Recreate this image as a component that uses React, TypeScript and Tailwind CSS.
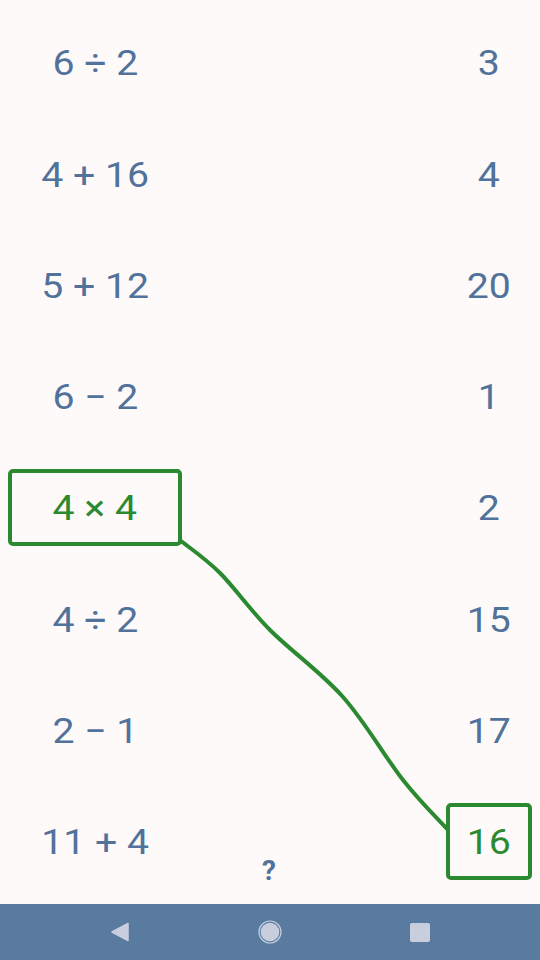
const rows = [
  { left: "6 ÷ 2", right: "3" },
  { left: "4 + 16", right: "4" },
  { left: "5 + 12", right: "20" },
  { left: "6 − 2", right: "1" },
  { left: "4 × 4", right: "2", leftSel: true },
  { left: "4 ÷ 2", right: "15" },
  { left: "2 − 1", right: "17" },
  { left: "11 + 4", right: "16", rightSel: true },
];

// points traced along the connecting line
const linePts: [number, number][] = [
  [181, 541],
  [220, 573],
  [270, 630],
  [343, 697],
  [403, 780],
  [447, 829],
];

const smoothPath = (pts: [number, number][]) => {
  let d = `M${pts[0][0]} ${pts[0][1]}`;
  for (let i = 0; i < pts.length - 1; i++) {
    const p0 = pts[i - 1] || pts[i];
    const p1 = pts[i];
    const p2 = pts[i + 1];
    const p3 = pts[i + 2] || p2;
    const c1x = p1[0] + (p2[0] - p0[0]) / 6;
    const c1y = p1[1] + (p2[1] - p0[1]) / 6;
    const c2x = p2[0] - (p3[0] - p1[0]) / 6;
    const c2y = p2[1] - (p3[1] - p1[1]) / 6;
    d += ` C${c1x} ${c1y}, ${c2x} ${c2y}, ${p2[0]} ${p2[1]}`;
  }
  return d;
};

const cell = "h-[77px] flex items-center justify-center text-[35px] pt-1";
const sel = "border-4 border-[#2b8a30] rounded-[5px] text-[#2b8a30]";

const App = () => {
  return (
    <div
      className="w-[540px] h-[960px] flex flex-col bg-[#fffafa] overflow-hidden"
      style={{ fontFamily: "Roboto, 'Noto Sans', sans-serif" }}
    >
      <div className="relative flex-1 flex flex-col py-[7px]">
        {rows.map((row) => (
          <div key={row.left} className="flex-1 flex items-center justify-between px-2">
            <div className={`${cell} w-[174px] ${row.leftSel ? sel : "text-[#51729a]"}`}>
              <span className="inline-block scale-x-[1.12]">{row.left}</span>
            </div>
            <div className={`${cell} w-[86px] ${row.rightSel ? sel : "text-[#51729a]"}`}>
              <span className="inline-block scale-x-[1.12]">{row.right}</span>
            </div>
          </div>
        ))}

        <svg className="absolute left-0 top-0 pointer-events-none" width="540" height="904">
          <path
            d={smoothPath(linePts)}
            fill="none"
            stroke="#2b8a30"
            strokeWidth="4"
            strokeLinecap="round"
            strokeLinejoin="round"
          />
        </svg>

        <div className="absolute left-[262px] top-[857px] text-[#51729a] text-[28px] font-bold leading-none">
          ?
        </div>
      </div>

      <div className="h-[56px] bg-[#587b9f] flex items-center justify-center">
        <div className="w-[150px] flex justify-center">
          <svg width="20" height="20" viewBox="0 0 20 20">
            <path d="M18 1.5 L2 10 L18 18.5 Z" fill="#c9cede" stroke="#c9cede" strokeWidth="1.5" strokeLinejoin="round" />
          </svg>
        </div>
        <div className="w-[150px] flex justify-center">
          <svg width="24" height="24" viewBox="0 0 24 24">
            <circle cx="12" cy="12" r="11" fill="none" stroke="#c9cede" strokeWidth="1.2" />
            <circle cx="12" cy="12" r="9.3" fill="#c9cede" />
          </svg>
        </div>
        <div className="w-[150px] flex justify-center">
          <div className="w-[20px] h-[19px] rounded-[2px] bg-[#c9cede]" />
        </div>
      </div>
    </div>
  );
};

export default App;
